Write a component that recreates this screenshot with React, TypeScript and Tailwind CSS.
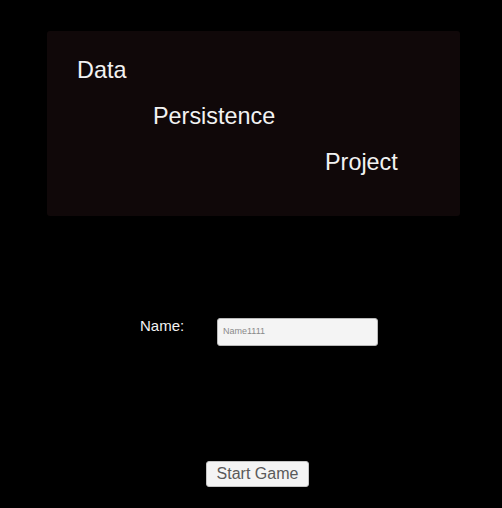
export default function App() {
  return (
    <div
      className="w-[502px] h-[508px] bg-black flex flex-col"
      style={{ fontFamily: '"Liberation Sans", Arial, sans-serif' }}
    >
      {/* title panel */}
      <div className="mt-[31px] ml-[47px] w-[413px] h-[185px] bg-[#100809] rounded-[3px] pt-[28px] flex flex-col gap-[23px] text-[23.4px] leading-[23px] text-[#f2f2f2]">
        <div className="pl-[30px]">Data</div>
        <div className="pl-[106px]">Persistence</div>
        <div className="pl-[278px]">Project</div>
      </div>

      {/* name row */}
      <div className="mt-[102px] flex items-start">
        <span className="ml-[140px] w-[77px] text-[15px] leading-[15px] text-[#f2f2f2]">Name:</span>
        <div className="w-[161px] h-[28px] bg-[#f4f4f4] border border-[#b9b9b9] rounded-[3px] flex items-center pl-[5px]">
          <span className="text-[9px] text-[#8a8a8a]">Name1111</span>
        </div>
      </div>

      {/* start button */}
      <button className="mt-[115px] ml-[206px] w-[103px] h-[26px] bg-[#f4f4f4] border border-[#c4c4c4] rounded-[3px] text-[16px] leading-[16px] text-[#5a5a5a] flex items-center justify-center">
        Start Game
      </button>
    </div>
  );
}
